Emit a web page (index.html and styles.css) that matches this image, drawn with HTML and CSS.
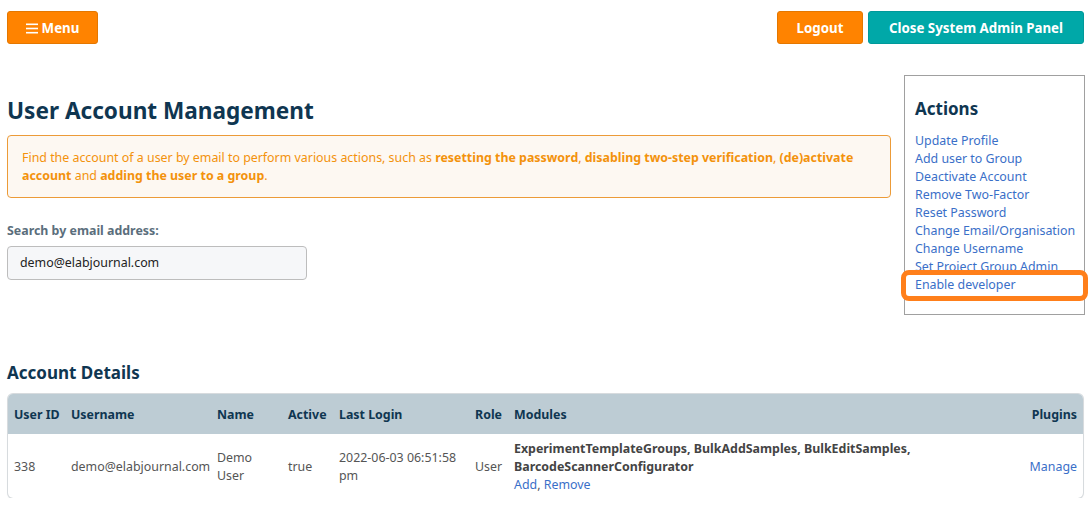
FILE: index.html
```html
<!DOCTYPE html>
<html>
<head>
<meta charset="utf-8">
<link rel="stylesheet" href="styles.css">
</head>
<body>
<div class="topbar">
  <button class="btn btn-orange menu-btn"><svg class="burger" width="12" height="11" viewBox="0 0 12 11"><rect x="0" y="0.5" width="12" height="1.6" fill="#fff"/><rect x="0" y="4.7" width="12" height="1.6" fill="#fff"/><rect x="0" y="8.9" width="12" height="1.6" fill="#fff"/></svg>Menu</button>
  <div class="top-right">
    <button class="btn btn-orange logout-btn">Logout</button>
    <button class="btn btn-teal close-btn">Close System Admin Panel</button>
  </div>
</div>

<div class="main">
  <div class="left">
    <h1 class="title">User Account Management</h1>
    <div class="alert">Find the account of a user by email to perform various actions, such as <b>resetting the password</b>, <b>disabling two-step verification</b>, <b>(de)activate account</b> and <b>adding the user to a group</b>.</div>
    <label class="label">Search by email address:</label>
    <div class="input">demo@elabjournal.com</div>
  </div>
  <div class="actions">
    <h2 class="actions-title">Actions</h2>
    <a class="link">Update Profile</a>
    <a class="link">Add user to Group</a>
    <a class="link">Deactivate Account</a>
    <a class="link">Remove Two-Factor</a>
    <a class="link">Reset Password</a>
    <a class="link">Change Email/Organisation</a>
    <a class="link">Change Username</a>
    <a class="link">Set Project Group Admin</a>
    <a class="link highlighted">Enable developer</a>
  </div>
</div>

<h2 class="section-title">Account Details</h2>
<div class="table-wrap">
  <table class="details">
    <colgroup>
      <col class="c-id"><col class="c-user"><col class="c-name"><col class="c-active"><col class="c-login"><col class="c-role"><col class="c-mod"><col class="c-plug">
    </colgroup>
    <thead>
      <tr>
        <th>User ID</th><th>Username</th><th>Name</th><th>Active</th><th>Last Login</th><th class="right">Role</th><th>Modules</th><th class="right">Plugins</th>
      </tr>
    </thead>
    <tbody>
      <tr>
        <td>338</td>
        <td>demo@elabjournal.com</td>
        <td>Demo<br>User</td>
        <td>true</td>
        <td>2022-06-03 06:51:58<br>pm</td>
        <td class="right">User</td>
        <td><b class="mods">ExperimentTemplateGroups, BulkAddSamples, BulkEditSamples,<br>BarcodeScannerConfigurator</b><br><a class="link inline">Add</a>, <a class="link inline">Remove</a></td>
        <td class="right"><a class="link inline">Manage</a></td>
      </tr>
    </tbody>
  </table>
</div>
</body>
</html>
```

FILE: styles.css
```css
* { box-sizing: border-box; }
body {
  margin: 0;
  padding: 11px 5px 0 7px;
  font-family: "Noto Sans", "Open Sans", sans-serif;
  font-size: 12.4px;
  color: #333;
  background: #fff;
}
.topbar {
  display: flex;
  justify-content: space-between;
  align-items: flex-start;
}
.top-right { display: flex; gap: 5px; margin-right: 1px; }
.btn {
  height: 33px;
  border: 1px solid transparent;
  border-radius: 3px;
  color: #fff;
  font-family: inherit;
  font-weight: 700;
  font-size: 13.3px;
  padding: 0 10px;
  cursor: pointer;
  display: flex;
  align-items: center;
  justify-content: center;
}
.btn-orange { background: #ff8300; border-color: #e47700; }
.btn-teal { background: #00a8a8; border-color: #00999a; }
.menu-btn { width: 91px; gap: 4px; }
.burger { display: block; margin-top: 1px; }
.logout-btn { width: 86px; }
.close-btn { width: 216px; }

.main {
  display: flex;
  justify-content: space-between;
  align-items: flex-start;
  margin-top: 31px;
}
.left { width: 884px; }
.title {
  margin: 20px 0 0;
  font-size: 22.6px;
  line-height: 32px;
  color: #0f3651;
  font-weight: 700;
}
.alert {
  margin-top: 8px;
  background: #fdf8f2;
  border: 1px solid #ec9b38;
  border-radius: 4px;
  color: #f3920c;
  padding: 13px 14px 12px 14px;
  line-height: 18px;
}
.alert b { font-weight: 700; }
.label {
  display: block;
  margin-top: 24px;
  font-weight: 700;
  color: #5b6e7c;
  line-height: 18px;
}
.input {
  margin-top: 6px;
  width: 300px;
  height: 34px;
  border: 1px solid #bdbdbd;
  border-radius: 4px;
  background: #f6f7f9;
  padding: 0 12px;
  line-height: 32px;
  color: #222;
}
.actions {
  width: 181px;
  border: 1px solid #a0a0a0;
  padding: 21px 10px 20px 10px;
  display: flex;
  flex-direction: column;
}
.actions-title {
  margin: 0 0 11px;
  font-size: 17px;
  line-height: 24px;
  color: #0f3651;
}
.link {
  color: #3a6fc8;
  line-height: 18px;
  text-decoration: none;
  white-space: nowrap;
}
.highlighted { position: relative; }
.highlighted::after {
  content: "";
  position: absolute;
  left: -14px;
  right: -14px;
  top: -6px;
  bottom: -7px;
  border: 5px solid #ff7f1a;
  border-radius: 8px;
}
.section-title {
  margin: 46px 0 0;
  font-size: 17px;
  line-height: 24px;
  color: #0f3651;
}
.table-wrap {
  margin-top: 9px;
  margin-left: 1px;
  margin-right: 2px;
  border-radius: 5px;
  overflow: hidden;
  box-shadow: 0 0 0 1px #d7dbde, 0 1px 2px rgba(0,0,0,0.12);
}
.details {
  width: 100%;
  border-collapse: collapse;
  table-layout: fixed;
}
.details th {
  background: #bdccd4;
  color: #0f3651;
  text-align: left;
  font-weight: 700;
  height: 40px;
  padding: 0 6px;
  white-space: nowrap;
}
.details td {
  padding: 6px 6px 4px 6px;
  height: 64px;
  vertical-align: middle;
  color: #555;
  line-height: 18px;
}
.details .right { text-align: right; }
.mods { color: #444; }
.inline { white-space: nowrap; }
.c-id { width: 57px; }
.c-user { width: 146px; }
.c-name { width: 71px; }
.c-active { width: 51px; }
.c-login { width: 136px; }
.c-role { width: 39px; }
.c-mod { width: 470px; }
.c-plug { width: auto; }
```
